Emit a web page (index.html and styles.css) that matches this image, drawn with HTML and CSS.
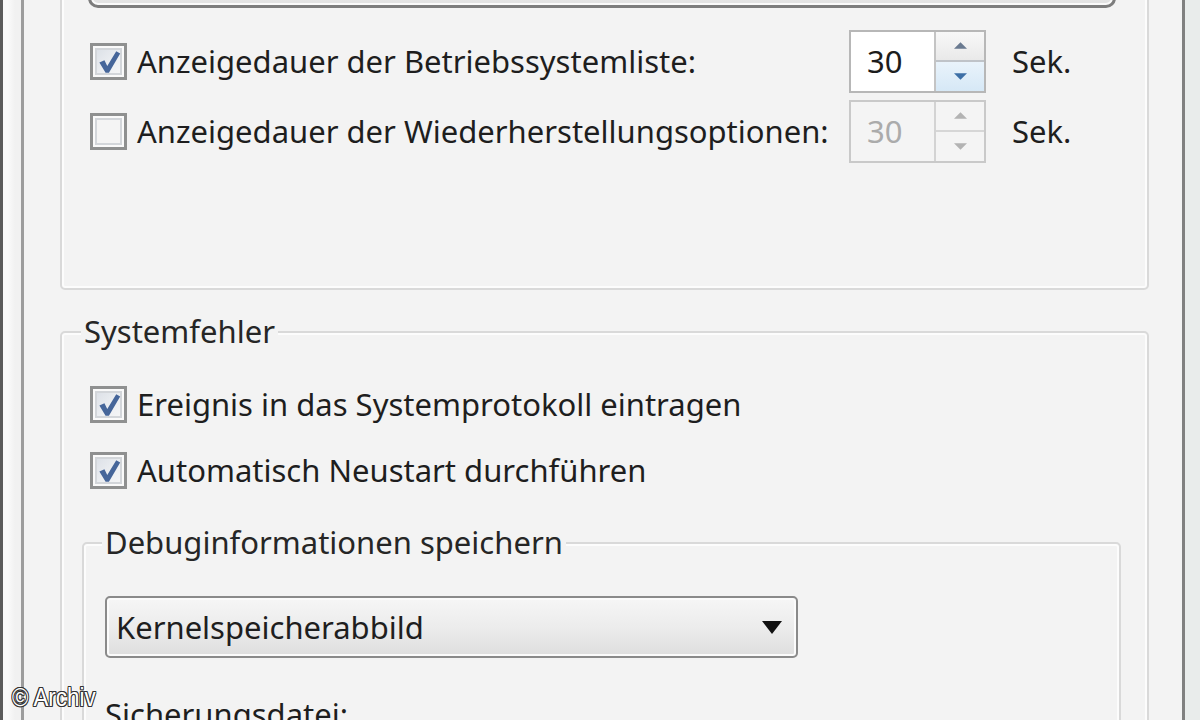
FILE: index.html
```html
<!DOCTYPE html>
<html lang="de">
<head>
<meta charset="utf-8">
<title>Starten und Wiederherstellen</title>
<link rel="stylesheet" href="styles.css">
</head>
<body>
<div class="screen">
  <div class="frame-outer">
    <div class="frame-inner">
      <div class="content">
        <div class="group g1">
          <div class="combo-top"></div>
          <div class="row">
            <span class="check checked"><svg viewBox="0 0 24 24" class="tick"><path d="M3 12.5 L7.5 10.5 L10 15.5 L18 2.5 L21.5 4.5 L11.5 21.5 L8.5 21.5 Z" /></svg></span>
            <span class="label">Anzeigedauer der Betriebssystemliste:</span>
            <span class="spin">
              <span class="spin-val">30</span>
              <span class="spin-btns">
                <span class="sb up"><svg viewBox="0 0 12 6"><path d="M0 6 L6 0 L12 6 Z"/></svg></span>
                <span class="sb down"><svg viewBox="0 0 12 6"><path d="M0 0 L12 0 L6 6 Z"/></svg></span>
              </span>
            </span>
            <span class="unit">Sek.</span>
          </div>
          <div class="row">
            <span class="check"></span>
            <span class="label">Anzeigedauer der Wiederherstellungsoptionen:</span>
            <span class="spin disabled">
              <span class="spin-val">30</span>
              <span class="spin-btns">
                <span class="sb up"><svg viewBox="0 0 12 6"><path d="M0 6 L6 0 L12 6 Z"/></svg></span>
                <span class="sb down"><svg viewBox="0 0 12 6"><path d="M0 0 L12 0 L6 6 Z"/></svg></span>
              </span>
            </span>
            <span class="unit">Sek.</span>
          </div>
        </div>

        <fieldset class="group g2">
          <legend>Systemfehler</legend>
          <div class="row short">
            <span class="check checked"><svg viewBox="0 0 24 24" class="tick"><path d="M3 12.5 L7.5 10.5 L10 15.5 L18 2.5 L21.5 4.5 L11.5 21.5 L8.5 21.5 Z" /></svg></span>
            <span class="label">Ereignis in das Systemprotokoll eintragen</span>
          </div>
          <div class="row short">
            <span class="check checked"><svg viewBox="0 0 24 24" class="tick"><path d="M3 12.5 L7.5 10.5 L10 15.5 L18 2.5 L21.5 4.5 L11.5 21.5 L8.5 21.5 Z" /></svg></span>
            <span class="label">Automatisch Neustart durchführen</span>
          </div>

          <fieldset class="group g3">
            <legend>Debuginformationen speichern</legend>
            <div class="select">
              <span class="select-text">Kernelspeicherabbild</span>
              <svg class="select-arrow" viewBox="0 0 20 13"><path d="M0 0 L20 0 L10 13 Z"/></svg>
            </div>
            <div class="plain">Sicherungsdatei:</div>
          </fieldset>
        </fieldset>
      </div>
    </div>
  </div>
  <div class="watermark">© Archiv</div>
</div>
</body>
</html>
```

FILE: styles.css
```css
* { box-sizing: border-box; }

html, body {
  margin: 0;
  padding: 0;
  background: #e9eceb;
}

.screen {
  position: relative;
  width: 1200px;
  height: 720px;
  overflow: hidden;
  background: #e9eceb;
  font-family: "Noto Sans", "Open Sans", sans-serif;
  font-size: 31px;
  color: #1e1e1e;
}

.frame-outer {
  width: 1185px;
  height: 100%;
  background: linear-gradient(to right, #fafafa 0, #fafafa 5px, #f1f1f1 12px, #f1f1f1 100%);
  border-left: 3px solid #5c5c5c;
  border-right: 3px solid #808080;
  padding-left: 18px;
}

.frame-inner {
  height: 100%;
  background: #f3f3f3;
  border-left: 3px solid #9c9c9c;
  padding-left: 36px;
  padding-right: 33px;
}

.content {
  display: flex;
  flex-direction: column;
}

/* group boxes */
.group {
  border: 2px solid #d9d9d9;
  border-radius: 5px;
  box-shadow: inset 0 0 0 2px #fcfcfc;
  margin: 0;
  min-width: 0;
}

.g1 {
  margin-top: -60px;
  padding: 10px 25px 122px 26px;
}

.g2 {
  margin-top: 22px;
  padding: 20px 26px 60px 26px;
}

.g3 {
  margin-top: 20px;
  margin-left: -6px;
  padding: 34px 20px 40px 21px;
}

legend {
  padding: 0 3px;
  margin-left: -7px;
  line-height: 39px;
  background: #f3f3f3;
  color: #262626;
}

.g3 legend {
  margin-left: -3px;
}

/* top combo remnant */
.combo-top {
  height: 56px;
  margin-bottom: 18px;
  margin-right: 6px;
  border: 3px solid #7d7d7d;
  border-radius: 10px;
  background: linear-gradient(to bottom, #f4f4f4, #e2e2e2);
  box-shadow: inset 0 0 0 2px #fafafa;
}

/* rows */
.row {
  display: flex;
  align-items: center;
  height: 70px;
}

.row.short {
  height: 66px;
}

.check {
  flex: 0 0 auto;
  width: 37px;
  height: 37px;
  margin-left: 2px;
  margin-right: 10px;
  border: 3px solid #8f9090;
  background: #f4f4f4;
  box-shadow: inset 0 0 0 2px #fafafa, inset 0 0 0 4px #d3d6da;
  position: relative;
}

.check.checked {
  background: linear-gradient(135deg, #d8dde4 0%, #eef0f3 60%, #f7f7f7 100%);
}

.tick {
  position: absolute;
  left: 3px;
  top: 2px;
  width: 27px;
  height: 28px;
  fill: #46669a;
}

.label {
  flex: 1 1 auto;
  white-space: nowrap;
}

/* spin box */
.spin {
  flex: 0 0 auto;
  width: 137px;
  height: 63px;
  display: flex;
  border: 2px solid #b7b7b7;
  background: #fff;
}

.spin-val {
  flex: 1 1 auto;
  padding-left: 16px;
  display: flex;
  align-items: center;
  color: #1c1c1c;
}

.spin-btns {
  flex: 0 0 50px;
  display: flex;
  flex-direction: column;
  border-left: 2px solid #c4c4c4;
}

.sb {
  flex: 1 1 0;
  display: flex;
  align-items: center;
  justify-content: center;
}

.sb svg {
  width: 13px;
  height: 7px;
}

.sb.up {
  background: linear-gradient(to bottom, #f8f8f8, #e9e9e9);
  border-bottom: 2px solid #bfc3c8;
  fill: #6a7a90;
}

.sb.down {
  background: linear-gradient(to bottom, #e9f3fb, #d6e8f6);
  fill: #3d6fa6;
}

.spin.disabled {
  border-color: #c9c9c9;
  background: #f4f4f4;
}

.spin.disabled .spin-val {
  color: #ababab;
}

.spin.disabled .spin-btns {
  border-left-color: #d3d3d3;
}

.spin.disabled .sb.up,
.spin.disabled .sb.down {
  background: #f4f4f4;
  fill: #b3b3b3;
}

.spin.disabled .sb.up {
  border-bottom-color: #d6d6d6;
}

.unit {
  flex: 0 0 110px;
  margin-left: 26px;
}

/* select */
.select {
  width: 693px;
  height: 62px;
  display: flex;
  align-items: center;
  justify-content: space-between;
  padding: 0 14px 0 9px;
  border: 2px solid #8a8a8a;
  border-radius: 5px;
  background: linear-gradient(to bottom, #f6f6f6 0%, #ececec 50%, #dedede 100%);
  box-shadow: inset 0 0 0 2px #fbfbfb;
}

.select-arrow {
  width: 20px;
  height: 13px;
  fill: #111;
}

.plain {
  margin-top: 36px;
  line-height: 40px;
}

/* watermark overlay */
.watermark {
  position: absolute;
  left: 12px;
  top: 682px;
  font-family: "Liberation Sans", Arial, sans-serif;
  font-size: 26px;
  color: #fff;
  transform: scaleX(0.86);
  transform-origin: left center;
  text-shadow:
    1px 1px 0 #333, -1px -1px 0 #333, 1px -1px 0 #333, -1px 1px 0 #333,
    0 1px 0 #333, 1px 0 0 #333, 0 -1px 0 #333, -1px 0 0 #333;
}
```
